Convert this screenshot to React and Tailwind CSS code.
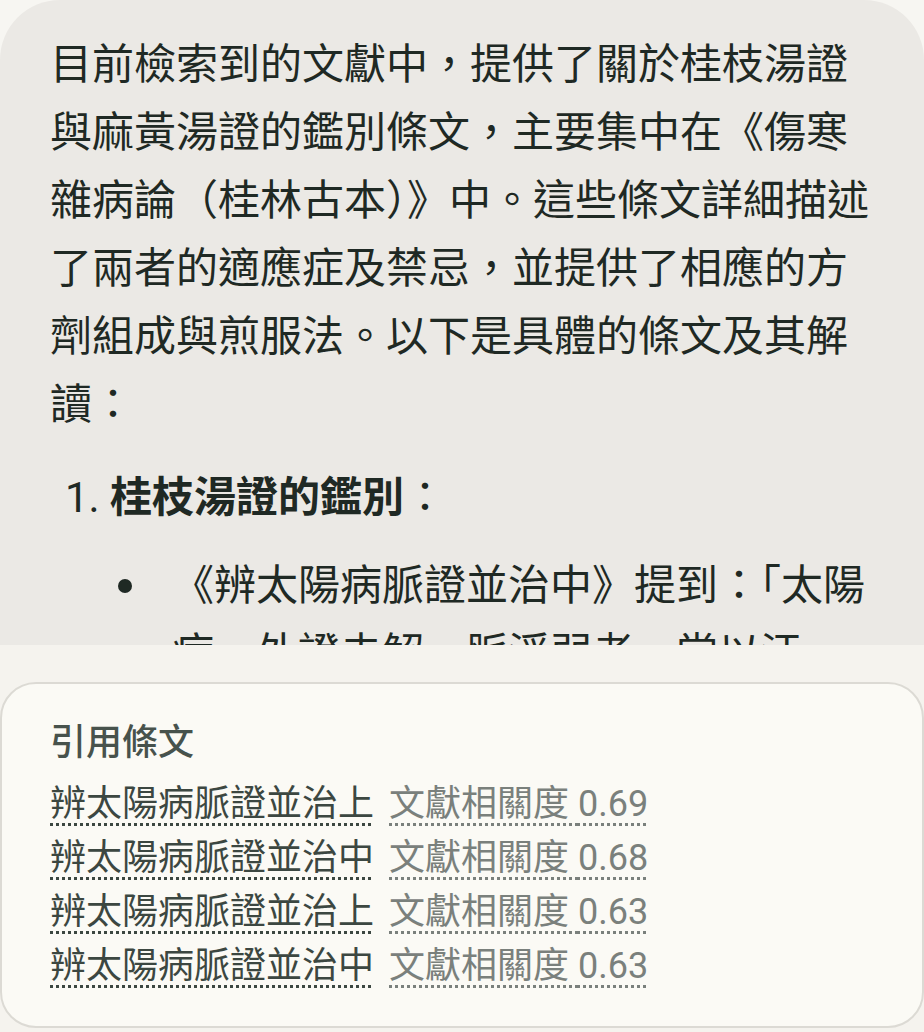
import React from 'react';

const citations = [
  { title: '辨太陽病脈證並治上', score: '0.69' },
  { title: '辨太陽病脈證並治中', score: '0.68' },
  { title: '辨太陽病脈證並治上', score: '0.63' },
  { title: '辨太陽病脈證並治中', score: '0.63' },
];

const font = { fontFamily: 'Roboto, "Noto Sans CJK TC", sans-serif' };

export default function App() {
  return (
    <div
      className="flex h-[1032px] w-[924px] flex-col overflow-hidden bg-[#f7f6f2] text-[#1f2924]"
      style={font}
    >
      {/* Answer bubble, scrolled under the sheet */}
      <div className="min-h-0 flex-1 overflow-hidden">
        <div className="rounded-t-[60px] bg-[#ebe9e5] px-[50px] pt-[31px] pb-10 text-[42px] leading-[68px]">
          <p className="mb-[25px]">
            目前檢索到的文獻中，提供了關於桂枝湯證與麻黃湯證的鑑別條文，主要集中在《傷寒雜病論（桂林古本）》中。這些條文詳細描述了兩者的適應症及禁忌，並提供了相應的方劑組成與煎服法。以下是具體的條文及其解讀：
          </p>
          <ol className="list-decimal pl-[60px]">
            <li>
              <strong className="font-bold">桂枝湯證的鑑別</strong>：
              <ul className="mt-5">
                <li className="flex">
                  <span className="flex h-[68px] w-[62px] shrink-0 items-center pl-[8px]">
                    <span className="h-[14px] w-[14px] rounded-full bg-[#1f2924]" />
                  </span>
                  <span>
                    《辨太陽病脈證並治中》提到：「太陽病，外證未解，脈浮弱者，當以汗解，宜桂枝湯。」
                  </span>
                </li>
              </ul>
            </li>
          </ol>
        </div>
      </div>

      {/* Citation sheet */}
      <div className="h-[387px] shrink-0 bg-[#f5f3ee] pt-[37px] pb-1">
        <div className="h-full rounded-[36px] border-2 border-[#dcdad4] bg-[#fbfaf5] px-[48px] pt-[35px] pb-[33px]">
          <h3 className="mb-[10px] text-[36px] leading-[48px] font-medium text-[#47524c]">引用條文</h3>
          <div className="flex flex-col">
            {citations.map((c, i) => (
              <div key={i} className="flex gap-[15px] text-[36px] leading-[54px]">
                <span className="text-[#3c4741] underline decoration-dotted decoration-[3px] underline-offset-[7px]">
                  {c.title}
                </span>
                <span className="text-[#7a807c] underline decoration-dotted decoration-[3px] underline-offset-[7px]">
                  文獻相關度 {c.score}
                </span>
              </div>
            ))}
          </div>
        </div>
      </div>
    </div>
  );
}
